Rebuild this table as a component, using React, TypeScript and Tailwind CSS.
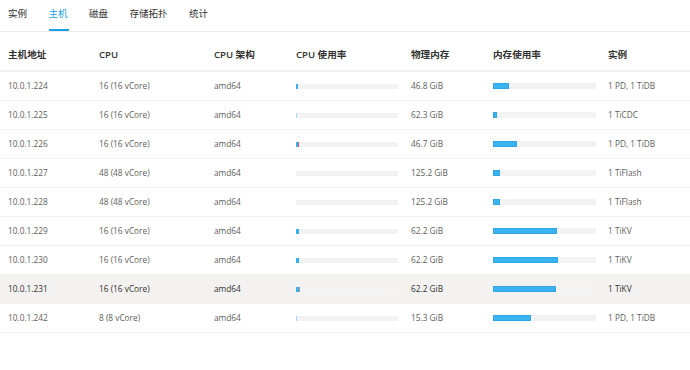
import React from "react";

type Seg = { w: number; c: string };
type Row = {
  host: string;
  cpu: string;
  arch: string;
  cpuSegs: Seg[];
  mem: string;
  memW: number;
  inst: string;
  hl?: boolean;
};

const B = "#35b0f0";
const LB = "#a9dcf7";
const R = "#f0555a";

const rows: Row[] = [
  { host: "10.0.1.224", cpu: "16 (16 vCore)", arch: "amd64", cpuSegs: [{ w: 2, c: B }], mem: "46.8 GiB", memW: 16, inst: "1 PD, 1 TiDB" },
  { host: "10.0.1.225", cpu: "16 (16 vCore)", arch: "amd64", cpuSegs: [{ w: 1, c: LB }], mem: "62.3 GiB", memW: 4, inst: "1 TiCDC" },
  { host: "10.0.1.226", cpu: "16 (16 vCore)", arch: "amd64", cpuSegs: [{ w: 2, c: B }, { w: 1, c: R }], mem: "46.7 GiB", memW: 24, inst: "1 PD, 1 TiDB" },
  { host: "10.0.1.227", cpu: "48 (48 vCore)", arch: "amd64", cpuSegs: [], mem: "125.2 GiB", memW: 7, inst: "1 TiFlash" },
  { host: "10.0.1.228", cpu: "48 (48 vCore)", arch: "amd64", cpuSegs: [], mem: "125.2 GiB", memW: 7, inst: "1 TiFlash" },
  { host: "10.0.1.229", cpu: "16 (16 vCore)", arch: "amd64", cpuSegs: [{ w: 3, c: B }], mem: "62.2 GiB", memW: 64, inst: "1 TiKV" },
  { host: "10.0.1.230", cpu: "16 (16 vCore)", arch: "amd64", cpuSegs: [{ w: 3, c: B }], mem: "62.2 GiB", memW: 65, inst: "1 TiKV" },
  { host: "10.0.1.231", cpu: "16 (16 vCore)", arch: "amd64", cpuSegs: [{ w: 3, c: B }, { w: 1, c: "#c98a9a" }], mem: "62.2 GiB", memW: 63, inst: "1 TiKV", hl: true },
  { host: "10.0.1.242", cpu: "8 (8 vCore)", arch: "amd64", cpuSegs: [{ w: 1, c: LB }], mem: "15.3 GiB", memW: 38, inst: "1 PD, 1 TiDB" },
];

const cols = "grid grid-cols-[91px_115px_82px_115px_82px_115px_1fr] items-center";

function Bar({ segs }: { segs: Seg[] }) {
  return (
    <div className="flex h-[5px] w-[102px] bg-[#f3f3f3]">
      {segs.map((s, i) => (
        <div key={i} className="h-full" style={{ width: s.w, background: s.c }} />
      ))}
    </div>
  );
}

export default function App() {
  const tabs = ["实例", "主机", "磁盘", "存储拓扑", "统计"];
  return (
    <div
      className="w-[690px] h-[370px] bg-white overflow-hidden"
      style={{ fontFamily: '"Open Sans", "Noto Sans CJK SC", sans-serif' }}
    >
      <div className="flex h-[32px] gap-[21.5px] pl-[8px] border-b border-[#edebe9]">
        {tabs.map((t) => {
          const active = t === "主机";
          return (
            <div
              key={t}
              className={
                "relative flex h-[31px] items-center pb-[3px] text-[9.5px] " +
                (active ? "text-[#1b9fe8]" : "text-[#323130]")
              }
            >
              {t}
              {active && (
                <div className="absolute left-0 right-[-1px] bottom-[0px] h-[2px] bg-[#1b9fe8]" />
              )}
            </div>
          );
        })}
      </div>
      <div className="mt-[9px]">
        <div className={cols + " h-[31px] pl-[8px] pb-[1px] border-b-2 border-[#f1f0ef] text-[9.6px] font-semibold text-[#323130]"}>
          <div>主机地址</div>
          <div>CPU</div>
          <div>CPU 架构</div>
          <div>CPU 使用率</div>
          <div>物理内存</div>
          <div>内存使用率</div>
          <div>实例</div>
        </div>
        {rows.map((r) => (
          <div
            key={r.host}
            className={
              cols +
              " h-[29px] pl-[8px] border-b border-[#f1f0ef] text-[8.3px] " +
              (r.hl ? "bg-[#f3f2f1] text-[#323130]" : "text-[#605e5c]")
            }
          >
            <div>{r.host}</div>
            <div>{r.cpu}</div>
            <div>{r.arch}</div>
            <div className="flex items-center">
              <Bar segs={r.cpuSegs} />
            </div>
            <div>{r.mem}</div>
            <div className="flex items-center">
              <div className="flex h-[6px] w-[103px] bg-[#f3f3f3]">
                <div className="h-full bg-[#3ab3f1] border border-[#2fa6e6]" style={{ width: r.memW }} />
              </div>
            </div>
            <div>{r.inst}</div>
          </div>
        ))}
      </div>
    </div>
  );
}
